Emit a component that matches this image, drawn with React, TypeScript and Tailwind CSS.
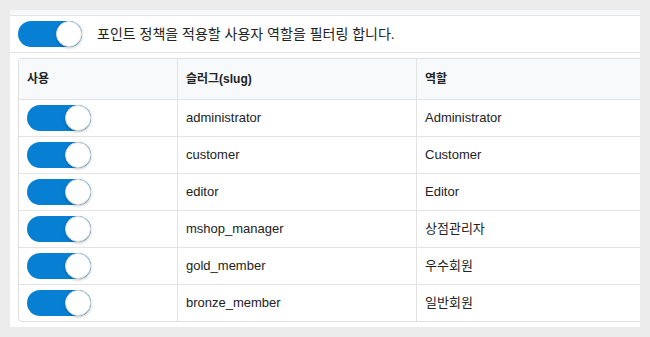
import React from 'react';

const roles = [
  { slug: 'administrator', name: 'Administrator' },
  { slug: 'customer', name: 'Customer' },
  { slug: 'editor', name: 'Editor' },
  { slug: 'mshop_manager', name: '상점관리자' },
  { slug: 'gold_member', name: '우수회원' },
  { slug: 'bronze_member', name: '일반회원' },
];

function Toggle() {
  return (
    <div className="relative w-[64px] h-[26px] rounded-full bg-[#0780d4] shrink-0">
      <div className="absolute right-0 top-0 w-[26px] h-[26px] rounded-full bg-white border border-[#dcdcdc] shadow-[0_1px_3px_rgba(0,0,0,0.25)]" />
    </div>
  );
}

export default function App() {
  return (
    <div
      className="w-[650px] h-[337px] bg-[#ececec] pt-[10px] px-[10px] text-[#333]"
      style={{ fontFamily: '"Liberation Sans", "Noto Sans CJK KR", sans-serif' }}
    >
      <div className="bg-white w-[630px] h-[317px] overflow-hidden">
        <div className="h-[6px] bg-[#f7f8fa] border-b border-[#e3e3e3]" />
        <div className="flex items-center h-[37px] pl-[8px] border-b border-[#e3e3e3]">
          <Toggle />
          <span className="ml-[15px] text-[14px] text-[#222]">포인트 정책을 적용할 사용자 역할을 필터링 합니다.</span>
        </div>
        <div className="pt-[5px] pl-[8px]">
          <div className="w-[700px] border border-[#dedede] rounded-[4px] overflow-hidden">
            <div className="flex h-[41px] bg-[#f8f9fa] border-b border-[#e3e3e3] text-[12px] font-bold text-[#222]">
              <div className="w-[159px] flex items-center pl-[8px] border-r border-[#e3e3e3]">사용</div>
              <div className="w-[239px] flex items-center pl-[8px] border-r border-[#e3e3e3]">슬러그(slug)</div>
              <div className="flex-1 flex items-center pl-[8px]">역할</div>
            </div>
            {roles.map((r, i) => (
              <div
                key={r.slug}
                className={`flex text-[13px] text-[#222] ${i < roles.length - 1 ? 'h-[37px] border-b border-[#e3e3e3]' : 'h-[36px]'}`}
              >
                <div className="w-[159px] flex items-center pl-[8px] border-r border-[#e3e3e3]">
                  <Toggle />
                </div>
                <div className="w-[239px] flex items-center pl-[8px] border-r border-[#e3e3e3]">{r.slug}</div>
                <div className="flex-1 flex items-center pl-[8px]">{r.name}</div>
              </div>
            ))}
          </div>
        </div>
      </div>
    </div>
  );
}
